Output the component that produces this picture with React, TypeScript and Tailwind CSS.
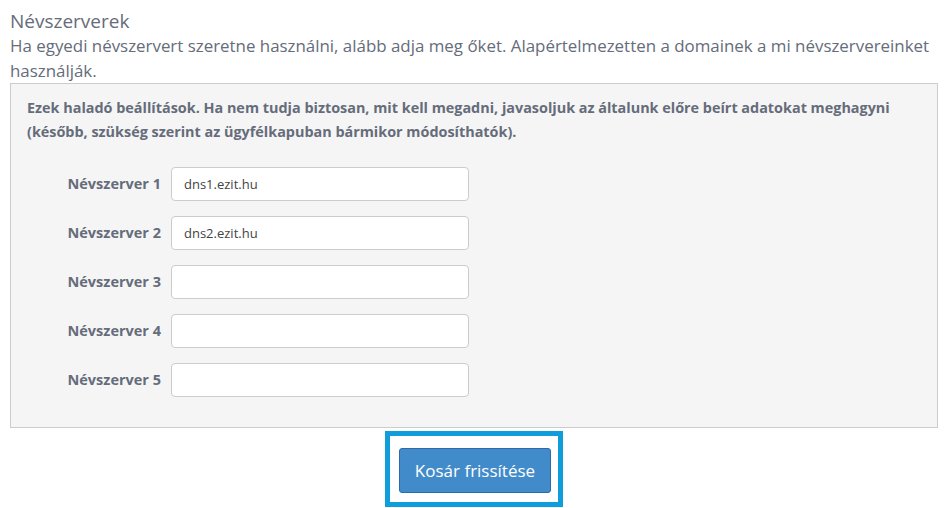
const servers = ['dns1.ezit.hu', 'dns2.ezit.hu', '', '', '']

export default function App() {
  return (
    <div className="bg-white w-[945px] h-[508px] overflow-hidden font-['Open_Sans',sans-serif] text-[#656c7a]">
      <div className="pl-[10px] pr-[7px] pt-[9px]">
        <h3 className="text-[19px] leading-[24px] font-medium">Névszerverek</h3>
        <p className="text-[16.9px] leading-[25px] -mr-[4px]">
          Ha egyedi névszervert szeretne használni, alább adja meg őket. Alapértelmezetten a domainek a mi névszervereinket használják.
        </p>

        <div className="border border-[#cccccc] bg-[#f5f5f5] px-[16px] pt-[12px] pb-[30px]">
          <p className="text-[14.4px] leading-[24px] font-bold">
            Ezek haladó beállítások. Ha nem tudja biztosan, mit kell megadni, javasoljuk az általunk előre beírt adatokat meghagyni (később, szükség szerint az ügyfélkapuban bármikor módosíthatók).
          </p>

          <div className="mt-[23px] flex flex-col gap-[15px]">
            {servers.map((value, i) => (
              <div key={i} className="flex items-center">
                <label className="w-[144px] pr-[10px] text-right text-[14.5px] font-bold">Névszerver {i + 1}</label>
                <input
                  readOnly
                  value={value}
                  className="w-[298px] h-[34px] rounded-[4px] border border-[#cccccc] bg-white px-[12px] text-[13px] text-[#444] outline-none"
                />
              </div>
            ))}
          </div>
        </div>

        <div className="flex justify-center mt-[3px]">
          <div className="border-[5px] border-[#109ddb] pl-[9px] pr-[7px] pt-[12px] pb-[9px]">
            <button className="h-[45px] w-[152px] rounded-[3px] border border-[#2d6aa8] bg-[#428bca] text-white text-[17px]">
              Kosár frissítése
            </button>
          </div>
        </div>
      </div>
    </div>
  )
}
